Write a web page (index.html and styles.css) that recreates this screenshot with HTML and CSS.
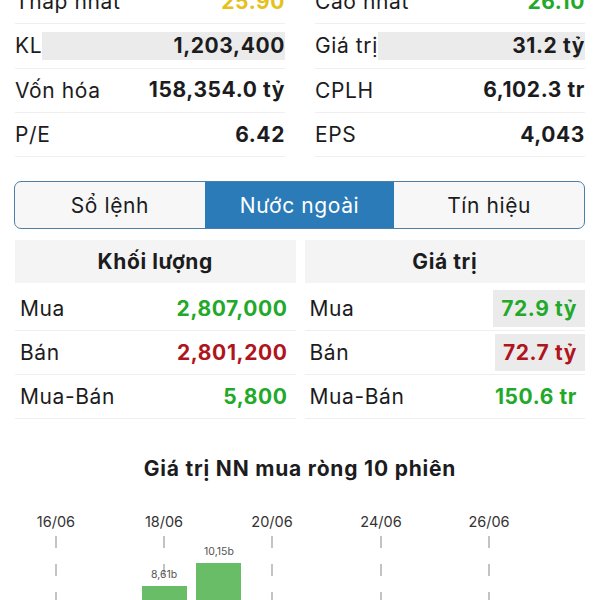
FILE: index.html
```html
<!DOCTYPE html>
<html lang="vi">
<head>
  <meta charset="UTF-8" />
  <meta name="viewport" content="width=device-width, initial-scale=1.0" />
  <title>Chi tiết cổ phiếu</title>
  <link rel="stylesheet" href="styles.css">
</head>
<body>
  <div class="stats">
    <div class="stat-col">
      <div class="stat-row"><span class="label">Thấp nhất</span><span class="value low">25.90</span></div>
      <div class="stat-row"><span class="label">KL</span><span class="value flash">1,203,400</span></div>
      <div class="stat-row"><span class="label">Vốn hóa</span><span class="value">158,354.0 tỷ</span></div>
      <div class="stat-row"><span class="label">P/E</span><span class="value">6.42</span></div>
    </div>
    <div class="stat-col">
      <div class="stat-row"><span class="label">Cao nhất</span><span class="value up">26.10</span></div>
      <div class="stat-row"><span class="label">Giá trị</span><span class="value flash">31.2 tỷ</span></div>
      <div class="stat-row"><span class="label">CPLH</span><span class="value">6,102.3 tr</span></div>
      <div class="stat-row"><span class="label">EPS</span><span class="value">4,043</span></div>
    </div>
  </div>

  <div class="tabs">
    <div class="tab">Sổ lệnh</div>
    <div class="tab active">Nước ngoài</div>
    <div class="tab">Tín hiệu</div>
  </div>

  <div class="foreign">
    <div class="foreign-col">
      <div class="foreign-head">Khối lượng</div>
      <div class="foreign-rows">
        <div class="foreign-row"><span>Mua</span><span class="num up">2,807,000</span></div>
        <div class="foreign-row"><span>Bán</span><span class="num down">2,801,200</span></div>
        <div class="foreign-row"><span>Mua-Bán</span><span class="num up">5,800</span></div>
      </div>
    </div>
    <div class="foreign-col">
      <div class="foreign-head">Giá trị</div>
      <div class="foreign-rows">
        <div class="foreign-row"><span>Mua</span><span class="num up boxed">72.9 tỷ</span></div>
        <div class="foreign-row"><span>Bán</span><span class="num down boxed">72.7 tỷ</span></div>
        <div class="foreign-row"><span>Mua-Bán</span><span class="num up">150.6 tr</span></div>
      </div>
    </div>
  </div>

  <div class="chart">
    <h2>Giá trị NN mua ròng 10 phiên</h2>
    <svg class="chart-svg" width="600" height="120" viewBox="0 0 600 120">
      <g class="axis-labels">
        <text x="56" y="46">16/06</text>
        <text x="164" y="46">18/06</text>
        <text x="272" y="46">20/06</text>
        <text x="381" y="46">24/06</text>
        <text x="489" y="46">26/06</text>
      </g>
      <g class="grid">
        <line x1="56" y1="55" x2="56" y2="120" />
        <line x1="164" y1="55" x2="164" y2="120" />
        <line x1="272" y1="55" x2="272" y2="120" />
        <line x1="381" y1="55" x2="381" y2="120" />
        <line x1="489" y1="55" x2="489" y2="120" />
      </g>
      <rect class="bar" x="142" y="105" width="45" height="20" />
      <rect class="bar" x="196" y="82" width="45" height="40" />
      <g class="bar-labels">
        <text x="164" y="97">8,61b</text>
        <text x="219" y="74">10,15b</text>
      </g>
    </svg>
  </div>
</body>
</html>
```

FILE: styles.css
```css
body {
  margin: 0;
  padding: 0 15px;
  background-color: #ffffff;
  color: #1c1c1e;
  font-family: Inter, "Liberation Sans", Arial, sans-serif;
  font-size: 21px;
  letter-spacing: 0.6px;
  overflow: hidden;
}
.stats {
  display: grid;
  grid-template-columns: 1fr 1fr;
  column-gap: 30px;
  margin-top: -20px;
}
.stat-row {
  display: flex;
  align-items: center;
  height: 44.33px;
  box-sizing: border-box;
  border-bottom: 1px solid #efefef;
}
.stat-row .label {
  white-space: nowrap;
}
.stat-row .value {
  flex: 1;
  height: 28px;
  line-height: 28px;
  text-align: right;
  font-weight: 700;
  white-space: nowrap;
}
.stat-row .flash {
  background-color: #ebebeb;
}
.low {
  color: #e6c11c;
}
.up {
  color: #22a92a;
}
.down {
  color: #b0141c;
}
.tabs {
  display: flex;
  margin: 24px 0 11px -1px;
  height: 48px;
  border: 1.5px solid #4c80a9;
  border-radius: 7px;
  overflow: hidden;
  box-sizing: border-box;
  background-color: #f7f7f7;
}
.tab {
  flex: 1;
  display: flex;
  align-items: center;
  justify-content: center;
}
.tab.active {
  background-color: #2b7bb9;
  color: #ffffff;
}
.foreign {
  display: grid;
  grid-template-columns: 1fr 1fr;
  column-gap: 9px;
}
.foreign-head {
  height: 43px;
  line-height: 43px;
  text-align: center;
  font-weight: 700;
  background-color: #f4f4f4;
}
.foreign-rows {
  margin-top: 4px;
}
.foreign-row {
  display: flex;
  align-items: center;
  justify-content: space-between;
  height: 44px;
  box-sizing: border-box;
  padding-left: 5px;
  border-bottom: 1px solid #efefef;
}
.num {
  font-weight: 700;
  padding: 0 8px;
  height: 37px;
  line-height: 37px;
}
.num.boxed {
  background-color: #ebebeb;
}
.chart h2 {
  margin: 38px 0 0;
  height: 24px;
  line-height: 24px;
  text-align: center;
  font-size: 21px;
  letter-spacing: 0.8px;
  font-weight: 700;
  color: #1c1c1e;
}
.chart-svg {
  display: block;
  margin-left: -15px;
  letter-spacing: 0;
}
.axis-labels text {
  font-size: 14.5px;
  fill: #333333;
  text-anchor: middle;
}
.grid line {
  stroke: #b0b0b0;
  stroke-width: 1.5;
  stroke-dasharray: 12 16;
}
.bar {
  fill: #69bd67;
}
.bar-labels text {
  font-size: 10.5px;
  fill: #555555;
  text-anchor: middle;
}
```
